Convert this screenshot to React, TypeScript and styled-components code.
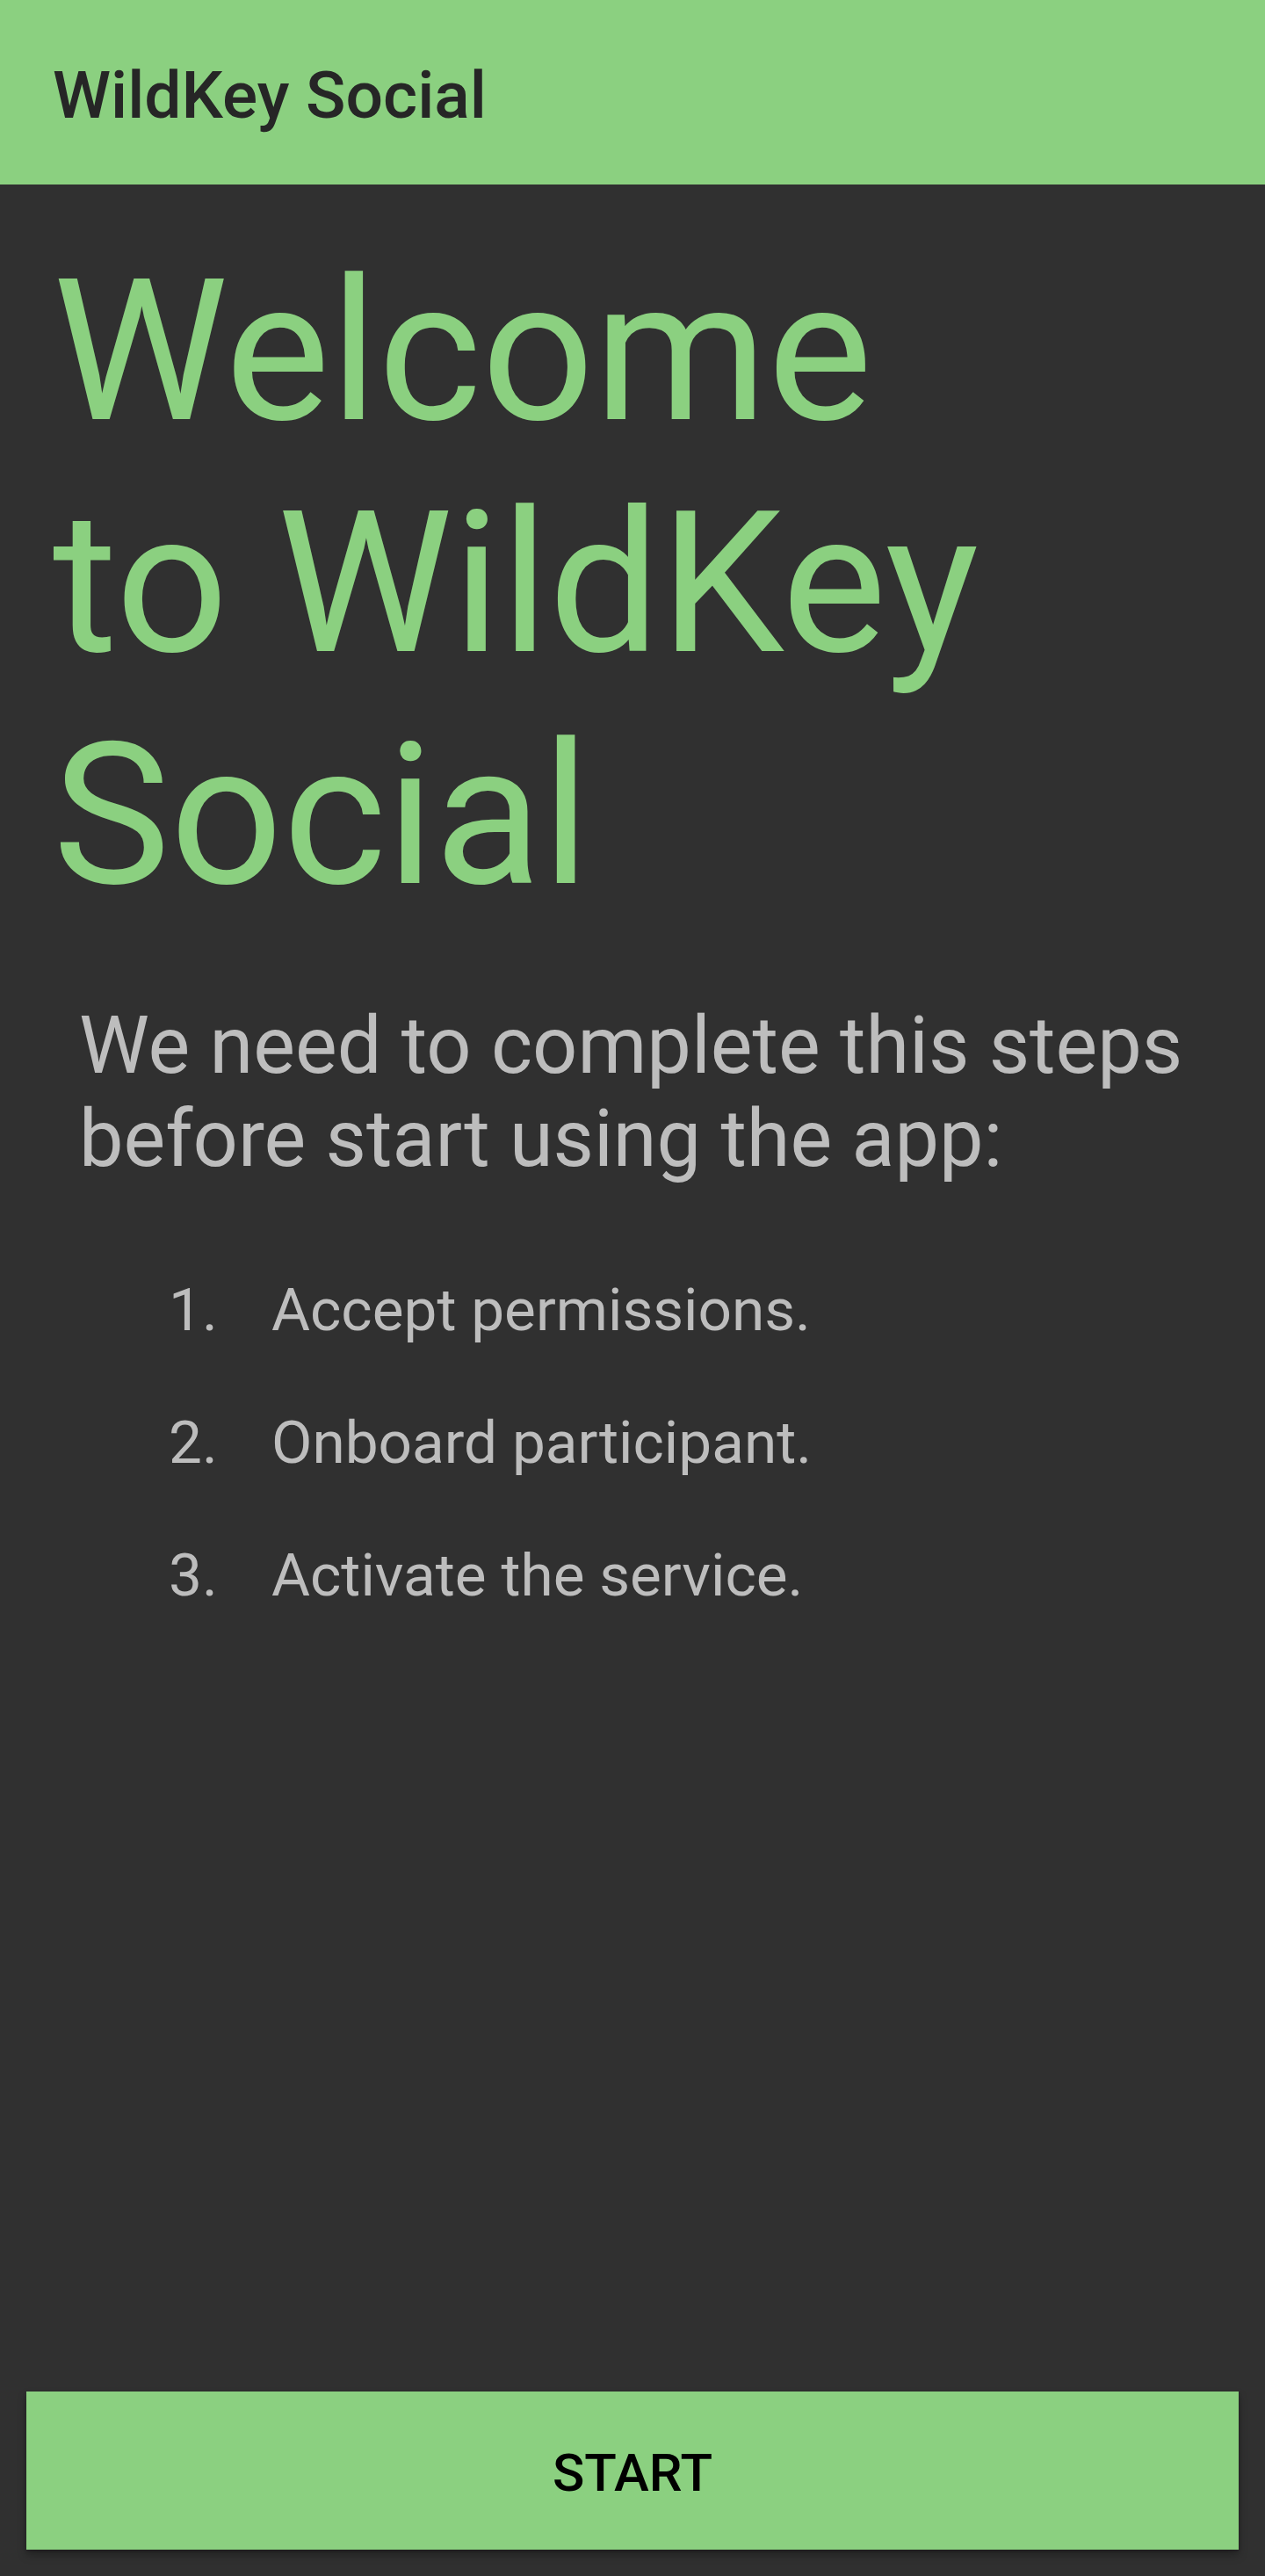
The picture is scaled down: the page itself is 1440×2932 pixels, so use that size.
import React from "react";
import styled, { createGlobalStyle } from "styled-components";

const GlobalStyle = createGlobalStyle`
  html, body {
    margin: 0;
    padding: 0;
    background: #303030;
  }
  body {
    font-family: Roboto, "Noto Sans", Arial, sans-serif;
  }
  * { box-sizing: border-box; }
`;

const Screen = styled.div`
  min-height: 100vh;
  display: flex;
  flex-direction: column;
  background: #303030;
`;

const TopBar = styled.header`
  height: 210px;
  background: #8bd080;
  padding: 64px 60px 0;
  flex-shrink: 0;
`;

const BarTitle = styled.h1`
  margin: 0;
  font-family: Roboto, sans-serif;
  font-weight: 500;
  font-size: 75px;
  line-height: 88px;
  color: #262626;
  white-space: nowrap;
`;

const Content = styled.main`
  display: flex;
  flex-direction: column;
  flex: 1;
`;

const Headline = styled.h2`
  margin: 58px 0 0;
  padding: 0 60px;
  font-family: Roboto, sans-serif;
  font-weight: 400;
  font-size: 225px;
  line-height: 264px;
  color: #8bd080;
  white-space: nowrap;
`;

const Intro = styled.p`
  margin: 78px 0 0;
  padding: 0 30px 0 90px;
  font-family: Roboto, sans-serif;
  font-weight: 400;
  font-size: 90px;
  line-height: 105.5px;
  color: #bdbdbd;
`;

const Steps = styled.ol`
  list-style: none;
  margin: 102px 0 0;
  padding: 0 0 0 192px;
  display: flex;
  flex-direction: column;
  gap: 72px;
`;

const Step = styled.li`
  display: flex;
  align-items: baseline;
  font-family: Roboto, sans-serif;
  font-size: 67.5px;
  line-height: 79px;
  color: #bdbdbd;
`;

const StepNumber = styled.span`
  width: 117px;
  flex-shrink: 0;
`;

const StepText = styled.span``;

const StartButton = styled.button`
  margin: auto 30px 30px;
  height: 180px;
  border: none;
  border-radius: 0;
  background: #8bd080;
  color: #000;
  font-family: Roboto, sans-serif;
  font-weight: 500;
  font-size: 60px;
  padding: 5px 0 0;
  text-transform: uppercase;
  box-shadow: 0 6px 10px rgba(0, 0, 0, 0.28), 0 2px 4px rgba(0, 0, 0, 0.2);
  cursor: pointer;
  flex-shrink: 0;
`;

const Spacer = styled.div`
  flex: 1;
  min-height: 40px;
`;

const steps = ["Accept permissions.", "Onboard participant.", "Activate the service."];

export default function App() {
  return (
    <>
      <GlobalStyle />
      <Screen>
        <TopBar>
          <BarTitle>WildKey Social</BarTitle>
        </TopBar>
        <Content>
          <Headline>
            Welcome
            <br />
            to WildKey
            <br />
            Social
          </Headline>
          <Intro>
            We need to complete this steps
            <br />
            before start using the app:
          </Intro>
          <Steps>
            {steps.map((s, i) => (
              <Step key={s}>
                <StepNumber>{i + 1}.</StepNumber>
                <StepText>{s}</StepText>
              </Step>
            ))}
          </Steps>
          <Spacer />
          <StartButton>Start</StartButton>
        </Content>
      </Screen>
    </>
  );
}
